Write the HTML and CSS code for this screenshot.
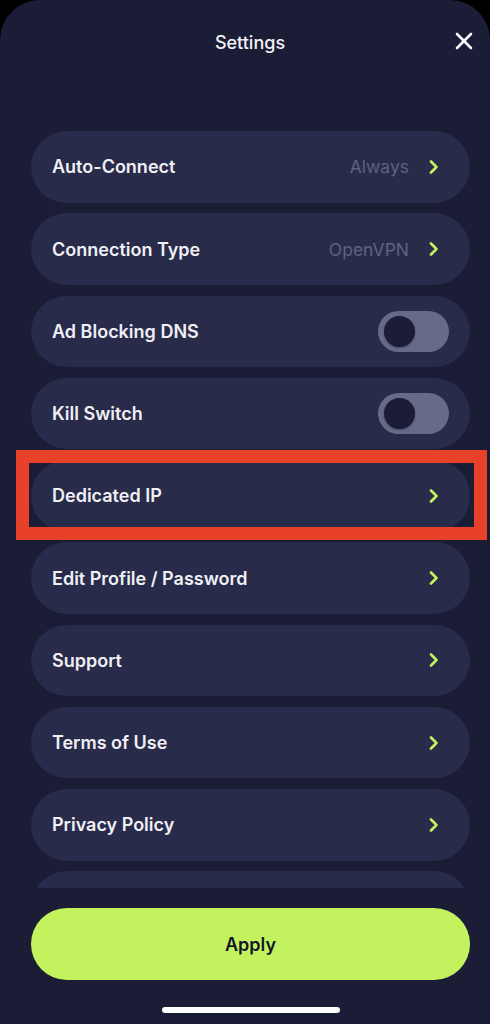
FILE: index.html
```html
<!DOCTYPE html>
<html>

<head>
    <meta charset="utf-8">
    <title>Settings</title>
    <link rel="stylesheet" href="styles.css">
</head>

<body>
    <div class="sheet">
        <div class="header">
            <span class="title">Settings</span>
            <svg class="close" width="18" height="18" viewBox="0 0 18 18">
                <path d="M2 2 L16 16 M16 2 L2 16" stroke="#ffffff" stroke-width="2.6" stroke-linecap="round"/>
            </svg>
        </div>

        <div class="list">
            <div class="row">
                <span class="label">Auto-Connect</span>
                <span class="value">Always</span>
                <svg class="chevron" width="10" height="14" viewBox="0 0 10 14"><path d="M2 1.5 L7.5 7 L2 12.5" fill="none" stroke="#c3f25f" stroke-width="2.6" stroke-linecap="round" stroke-linejoin="round"/></svg>
            </div>
            <div class="row">
                <span class="label">Connection Type</span>
                <span class="value">OpenVPN</span>
                <svg class="chevron" width="10" height="14" viewBox="0 0 10 14"><path d="M2 1.5 L7.5 7 L2 12.5" fill="none" stroke="#c3f25f" stroke-width="2.6" stroke-linecap="round" stroke-linejoin="round"/></svg>
            </div>
            <div class="row">
                <span class="label">Ad Blocking DNS</span>
                <span class="toggle"><span class="knob"></span></span>
            </div>
            <div class="row">
                <span class="label">Kill Switch</span>
                <span class="toggle"><span class="knob"></span></span>
            </div>
            <div class="row">
                <span class="label">Dedicated IP</span>
                <svg class="chevron" width="10" height="14" viewBox="0 0 10 14"><path d="M2 1.5 L7.5 7 L2 12.5" fill="none" stroke="#c3f25f" stroke-width="2.6" stroke-linecap="round" stroke-linejoin="round"/></svg>
            </div>
            <div class="row">
                <span class="label">Edit Profile / Password</span>
                <svg class="chevron" width="10" height="14" viewBox="0 0 10 14"><path d="M2 1.5 L7.5 7 L2 12.5" fill="none" stroke="#c3f25f" stroke-width="2.6" stroke-linecap="round" stroke-linejoin="round"/></svg>
            </div>
            <div class="row">
                <span class="label">Support</span>
                <svg class="chevron" width="10" height="14" viewBox="0 0 10 14"><path d="M2 1.5 L7.5 7 L2 12.5" fill="none" stroke="#c3f25f" stroke-width="2.6" stroke-linecap="round" stroke-linejoin="round"/></svg>
            </div>
            <div class="row">
                <span class="label">Terms of Use</span>
                <svg class="chevron" width="10" height="14" viewBox="0 0 10 14"><path d="M2 1.5 L7.5 7 L2 12.5" fill="none" stroke="#c3f25f" stroke-width="2.6" stroke-linecap="round" stroke-linejoin="round"/></svg>
            </div>
            <div class="row">
                <span class="label">Privacy Policy</span>
                <svg class="chevron" width="10" height="14" viewBox="0 0 10 14"><path d="M2 1.5 L7.5 7 L2 12.5" fill="none" stroke="#c3f25f" stroke-width="2.6" stroke-linecap="round" stroke-linejoin="round"/></svg>
            </div>
            <!-- next row, scrolled out of view -->
            <div class="row"></div>
        </div>

        <button class="apply">Apply</button>
        <div class="home-bar"></div>

        <!-- highlight drawn over the Dedicated IP row -->
        <div class="highlight"></div>
    </div>
</body>

</html>
```

FILE: styles.css
```css
body {
    margin: 0;
    background-color: #000000;
    font-family: Inter, "Noto Sans", sans-serif;
}

.sheet {
    position: relative;
    width: 490px;
    height: 1024px;
    background-color: #1b1c36;
    border-radius: 40px 40px 0 0;
    overflow: hidden;
}

.header {
    position: relative;
    height: 84px;
    display: flex;
    align-items: center;
    justify-content: center;
}

.title {
    color: #f2f2f5;
    font-size: 18px;
    font-weight: 500;
    margin-left: 10px;
}

.close {
    position: absolute;
    right: 17px;
    top: 32px;
}

.list {
    margin-top: 47px;
    height: 757px;
    overflow: hidden;
    display: flex;
    flex-direction: column;
    gap: 10.75px;
    padding: 0 20px 0 31px;
}

.row {
    flex: none;
    height: 71.5px;
    background-color: #292b4b;
    border-radius: 36px;
    display: flex;
    align-items: center;
    padding: 0 31px 0 21px;
}

.label {
    flex: 1;
    color: #f0f0f4;
    font-size: 18px;
    font-weight: 600;
}

.value {
    color: #5f6282;
    font-size: 17.5px;
    margin-right: 20px;
}

.chevron {
    display: block;
}

.toggle {
    width: 71px;
    height: 41px;
    border-radius: 21px;
    background-color: #686a8a;
    margin-right: -10px;
    display: flex;
    align-items: center;
    padding-left: 6px;
    box-sizing: border-box;
}

.knob {
    width: 31px;
    height: 31px;
    border-radius: 50%;
    background-color: #1b1c36;
    box-shadow: 0 1px 2px rgba(0, 0, 0, 0.35);
}

.apply {
    display: block;
    margin: 20px 20px 0 31px;
    width: 439px;
    height: 72px;
    border: none;
    border-radius: 36px;
    background-color: #c3f25f;
    color: #14152a;
    font-family: Inter, "Noto Sans", sans-serif;
    font-size: 18px;
    font-weight: 600;
}

.home-bar {
    width: 178px;
    height: 6px;
    border-radius: 3px;
    background-color: #ffffff;
    margin: 27px 0 0 162px;
}

.highlight {
    position: absolute;
    left: 16px;
    top: 450px;
    width: 471px;
    height: 90px;
    border: 13px solid #e8412a;
    box-sizing: border-box;
}
```
